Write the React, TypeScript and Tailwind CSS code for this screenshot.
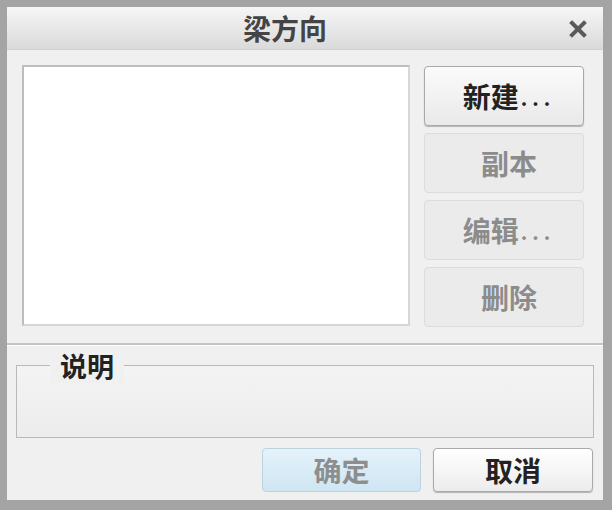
import React from "react";

const font = { fontFamily: '"Noto Sans CJK SC", "Noto Sans", sans-serif' };

function Btn({ label, enabled, dots }: { label: string; enabled?: boolean; dots?: boolean }) {
  return (
    <div
      className={
        "h-[60px] w-[160px] rounded-[4px] flex items-center justify-center font-bold text-[28px] " +
        (enabled
          ? "border border-[#a9a9a9] bg-gradient-to-b from-[#fbfbfb] to-[#e9e9e9] text-[#222] shadow-[0_1px_1px_rgba(0,0,0,0.25)]"
          : "border border-[#dcdcdc] bg-[#ebebeb] text-[#8c8c8c]")
      }
    >
      <span className="pl-[10px] leading-none">{label}</span>
      {dots ? <span className="tracking-[5px] text-[20px] font-bold ml-[2px] leading-none pt-[4px]">...</span> : null}
    </div>
  );
}

export default function App() {
  return (
    <div style={font} className="w-[612px] h-[510px] bg-[#a4a4a4] pt-[7px] pl-[7px] pr-[9px] pb-[10px]">
      <div className="w-full h-full bg-[#f0f0f0] flex flex-col">
        {/* title */}
        <div className="relative h-[43px] bg-gradient-to-b from-[#f6f6f6] to-[#dadada] border-b border-[#cfcfcf] flex items-center justify-center">
          <span className="text-[28px] font-bold text-[#444] leading-none mr-[40px]">梁方向</span>
          <svg className="absolute right-[16px] top-[13px]" width="18" height="18" viewBox="0 0 18 18">
            <path d="M3 3 L15 15 M15 3 L3 15" stroke="#5a5a5a" strokeWidth="4" strokeLinecap="square" />
          </svg>
        </div>
        {/* upper */}
        <div className="flex pl-[15px] pt-[15px] h-[293px]">
          <div className="w-[388px] h-[261px] bg-white border-2 border-[#bdbdbd] border-r-[#d6d6d6] border-b-[#d6d6d6]" />
          <div className="ml-[14px] flex flex-col gap-[7px] pt-[1px]">
            <Btn label="新建" enabled dots />
            <Btn label="副本" />
            <Btn label="编辑" dots />
            <Btn label="删除" />
          </div>
        </div>
        {/* separator */}
        <div className="h-[2px] bg-[#c4c4c4]" />
        <div className="h-[1px] bg-white" />
        {/* lower */}
        <div className="relative pl-[9px] pr-[9px] pt-[19px]">
          <div className="h-[73px] border border-[#b9b9b9] bg-gradient-to-b from-[#f4f4f4] to-[#ececec]" />
          <span className="absolute left-[43px] top-[3px] px-[10px] bg-[#f0f0f0] text-[27px] font-bold text-[#222] leading-[34px]">
            说明
          </span>
          <div className="flex justify-end gap-[12px] mt-[10px] pr-[1px]">
            <div className="w-[159px] h-[44px] rounded-[4px] border border-[#bcd3df] bg-gradient-to-b from-[#e4f2fa] to-[#cfe6f3] flex items-center justify-center text-[28px] font-bold text-[#8e8e8e]">
              确定
            </div>
            <div className="w-[160px] h-[44px] rounded-[4px] border border-[#a9a9a9] bg-gradient-to-b from-[#ffffff] to-[#ececec] shadow-[0_1px_1px_rgba(0,0,0,0.25)] flex items-center justify-center text-[28px] font-bold text-[#222]">
              取消
            </div>
          </div>
        </div>
      </div>
    </div>
  );
}
